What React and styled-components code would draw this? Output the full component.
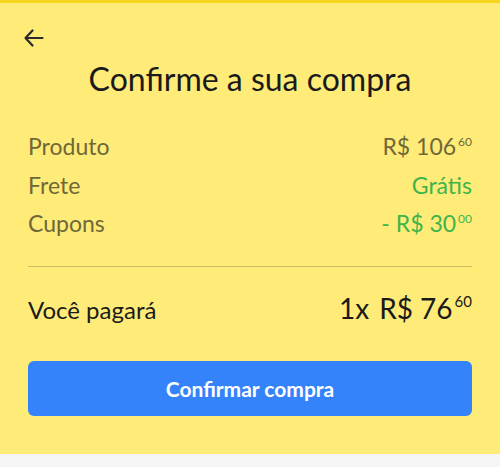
import React from 'react';
import styled, { createGlobalStyle } from 'styled-components';

const GlobalStyle = createGlobalStyle`
  html, body {
    margin: 0;
    padding: 0;
    background: #f5f5f5;
  }
  body {
    font-family: Lato, "Open Sans", "Noto Sans", sans-serif;
  }
`;

const Sheet = styled.div`
  background: #ffeb78;
  border-top: 3px solid #f7d51c;
  padding: 0 28px 38px;
  display: flex;
  flex-direction: column;
`;

const BackButton = styled.button`
  align-self: flex-start;
  margin: 23px 0 0 -6px;
  width: 24px;
  height: 24px;
  padding: 0;
  border: none;
  background: none;
  color: #2b2b2b;
  display: flex;
  align-items: center;
  justify-content: center;
  cursor: pointer;
`;

const Title = styled.h1`
  margin: 9px 0 0;
  font-size: 32px;
  line-height: 40px;
  font-weight: 400;
  color: #1a1a1a;
  text-align: center;
`;

const Summary = styled.div`
  margin-top: 28px;
  display: flex;
  flex-direction: column;
`;

const Row = styled.div`
  display: flex;
  justify-content: space-between;
  align-items: baseline;
  font-size: 23px;
  line-height: 38.5px;
  color: #6e6838;
`;

const Value = styled.span`
  color: ${({ $positive }) => ($positive ? '#3db54a' : '#6e6838')};
`;

const Cents = styled.span`
  font-size: ${({ $big }) => ($big ? '15px' : '12px')};
  line-height: 0;
  vertical-align: ${({ $big }) => ($big ? '12px' : '9px')};
  margin-left: 2px;
`;

const Divider = styled.hr`
  margin: 23px 0 0;
  border: none;
  height: 1px;
  background: #c9bc6a;
`;

const TotalRow = styled.div`
  margin-top: 21px;
  display: flex;
  justify-content: space-between;
  align-items: baseline;
  line-height: 40px;
  color: #1a1a1a;
`;

const TotalLabel = styled.span`
  font-size: 24px;
`;

const TotalValue = styled.span`
  font-size: 28px;
  display: flex;
  align-items: baseline;
  gap: 10px;
`;

const ConfirmButton = styled.button`
  margin-top: 31px;
  height: 55px;
  border: none;
  border-radius: 6px;
  background: #3483fa;
  color: #fff;
  font-family: inherit;
  font-size: 21px;
  font-weight: 700;
  cursor: pointer;
`;

const Money = ({ amount, cents, big }) => (
  <span>
    R$ {amount}
    <Cents $big={big}>{cents}</Cents>
  </span>
);

export default function App() {
  return (
    <>
      <GlobalStyle />
      <Sheet>
        <BackButton aria-label="Voltar">
          <svg width="20" height="18" viewBox="0 0 20 18" fill="none" stroke="currentColor" strokeWidth="2.2" strokeLinecap="round" strokeLinejoin="round">
            <path d="M18.5 9H1.5M8.5 1.5L1.5 9l7 7.5" />
          </svg>
        </BackButton>
        <Title>Confirme a sua compra</Title>
        <Summary>
          <Row>
            <span>Produto</span>
            <Value>
              <Money amount="106" cents="60" />
            </Value>
          </Row>
          <Row>
            <span>Frete</span>
            <Value $positive>Grátis</Value>
          </Row>
          <Row>
            <span>Cupons</span>
            <Value $positive>
              - <Money amount="30" cents="00" />
            </Value>
          </Row>
        </Summary>
        <Divider />
        <TotalRow>
          <TotalLabel>Você pagará</TotalLabel>
          <TotalValue>
            <span>1x</span>
            <Money amount="76" cents="60" big />
          </TotalValue>
        </TotalRow>
        <ConfirmButton>Confirmar compra</ConfirmButton>
      </Sheet>
    </>
  );
}
